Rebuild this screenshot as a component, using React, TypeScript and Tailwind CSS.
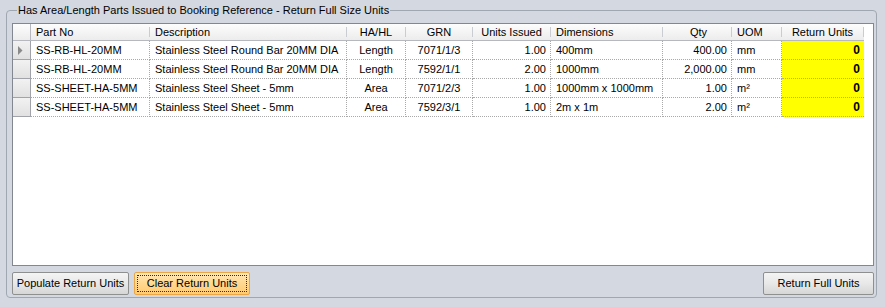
import React from "react";

type Align = "left" | "center" | "right";
interface Col {
  w: number;
  label: string;
  hAlign: Align;
  dAlign: Align;
}

const cols: Col[] = [
  { w: 119, label: "Part No", hAlign: "left", dAlign: "left" },
  { w: 197, label: "Description", hAlign: "left", dAlign: "left" },
  { w: 59, label: "HA/HL", hAlign: "center", dAlign: "center" },
  { w: 67, label: "GRN", hAlign: "center", dAlign: "center" },
  { w: 78, label: "Units Issued", hAlign: "center", dAlign: "right" },
  { w: 112, label: "Dimensions", hAlign: "left", dAlign: "left" },
  { w: 69, label: "Qty", hAlign: "right", dAlign: "right" },
  { w: 50, label: "UOM", hAlign: "left", dAlign: "left" },
  { w: 82, label: "Return Units", hAlign: "center", dAlign: "right" },
];

const rows: string[][] = [
  ["SS-RB-HL-20MM", "Stainless Steel Round Bar 20MM DIA", "Length", "7071/1/3", "1.00", "400mm", "400.00", "mm", "0"],
  ["SS-RB-HL-20MM", "Stainless Steel Round Bar 20MM DIA", "Length", "7592/1/1", "2.00", "1000mm", "2,000.00", "mm", "0"],
  ["SS-SHEET-HA-5MM", "Stainless Steel Sheet - 5mm", "Area", "7071/2/3", "1.00", "1000mm x 1000mm", "1.00", "m²", "0"],
  ["SS-SHEET-HA-5MM", "Stainless Steel Sheet - 5mm", "Area", "7592/3/1", "1.00", "2m x 1m", "2.00", "m²", "0"],
];

const justify: Record<Align, string> = {
  left: "justify-start",
  center: "justify-center",
  right: "justify-end",
};

function HeaderCell({ col }: { col: Col }) {
  const pad =
    col.hAlign === "left" ? "pl-[5px]" : col.hAlign === "right" ? "pr-[24px]" : "";
  return (
    <div className="flex h-full shrink-0" style={{ width: col.w }}>
      <div className={`flex flex-1 items-center ${justify[col.hAlign]} ${pad} whitespace-nowrap overflow-hidden`}>
        {col.label}
      </div>
      <div className="my-[3px] w-px bg-[#c9ccd1]" />
    </div>
  );
}

function DataCell({ col, value, last }: { col: Col; value: string; last: boolean }) {
  const pad =
    col.dAlign === "left" ? "pl-[5px]" : col.dAlign === "right" ? "pr-[4px]" : "";
  if (last) {
    return (
      <div
        className="flex h-full shrink-0 items-center justify-end bg-[#ffff00] pr-[4px] text-[12px] font-bold border-b border-dotted border-[#a9a9a9]"
        style={{ width: col.w }}
      >
        {value}
      </div>
    );
  }
  return (
    <div
      className={`flex h-full shrink-0 items-center ${justify[col.dAlign]} ${pad} whitespace-nowrap overflow-hidden border-r border-b border-dotted border-[#a9a9a9]`}
      style={{ width: col.w }}
    >
      {value}
    </div>
  );
}

function Button({ label, hot, w }: { label: string; hot?: boolean; w: number }) {
  if (hot) {
    return (
      <div
        className="flex h-[23px] items-center justify-center rounded-[2px] border border-[#eda646] bg-gradient-to-b from-[#ffe8b5] via-[#ffd88f] to-[#ffcb70] p-[2px]"
        style={{ width: w }}
      >
        <div className="flex h-full w-full items-center justify-center border border-dotted border-[#3a2a10]">
          {label}
        </div>
      </div>
    );
  }
  return (
    <div
      className="flex h-[23px] items-center justify-center rounded-[2px] border border-[#8e8f8f] bg-gradient-to-b from-[#f4f4f4] via-[#e8e8e8] to-[#d6d6d6]"
      style={{ width: w }}
    >
      {label}
    </div>
  );
}

export default function App() {
  return (
    <div
      className="h-[307px] w-[885px] bg-[#d4d9e1] pl-[6px] pr-[8px] pt-[10px] text-[11px] leading-[13px] text-black"
      style={{ fontFamily: '"Liberation Sans", Arial, sans-serif' }}
    >
      <div className="relative flex h-[288px] flex-col rounded-[4px] border border-[#a1a7b0] pb-[2px] pl-[5px] pr-[2px] pt-[12px]">
        <span className="absolute left-[10px] top-[-7px] bg-[#d4d9e1] px-[1px] whitespace-nowrap">
          Has Area/Length Parts Issued to Booking Reference - Return Full Size Units
        </span>

        {/* Grid */}
        <div className="flex h-[243px] flex-col border border-[#828790] bg-white">
          {/* Header */}
          <div className="flex h-[17px] shrink-0">
            <div className="flex h-full w-[18px] shrink-0 border-b border-r border-[#b5b9bf] bg-gradient-to-b from-[#fdfdfd] to-[#ececec]" />
            <div className="flex h-full border-b border-[#b5b9bf] bg-gradient-to-b from-[#fdfdfd] to-[#ececec]">
              {cols.map((c) => (
                <HeaderCell key={c.label} col={c} />
              ))}
            </div>
            <div className="flex-1" />
          </div>

          {/* Rows */}
          {rows.map((r, ri) => (
            <div key={ri} className="flex h-[19px] shrink-0">
              <div className="flex h-full w-[18px] shrink-0 items-center border-b border-r border-[#a0a4aa] bg-gradient-to-b from-[#f2f2f2] to-[#e1e1e1] pl-[5px]">
                {ri === 0 && (
                  <svg width="5" height="9" viewBox="0 0 5 9">
                    <path d="M0 0 L4.5 4.5 L0 9 Z" fill="#8a8a8a" />
                  </svg>
                )}
              </div>
              {cols.map((c, ci) => (
                <DataCell key={ci} col={c} value={r[ci]} last={ci === cols.length - 1} />
              ))}
              <div className="flex-1" />
            </div>
          ))}
          <div className="flex-1" />
        </div>

        {/* Buttons */}
        <div className="mt-[6px] flex items-center">
          <Button label="Populate Return Units" w={117} />
          <div className="ml-[5px]">
            <Button label="Clear Return Units" hot w={116} />
          </div>
          <div className="flex-1" />
          <Button label="Return Full Units" w={111} />
        </div>
      </div>
    </div>
  );
}
